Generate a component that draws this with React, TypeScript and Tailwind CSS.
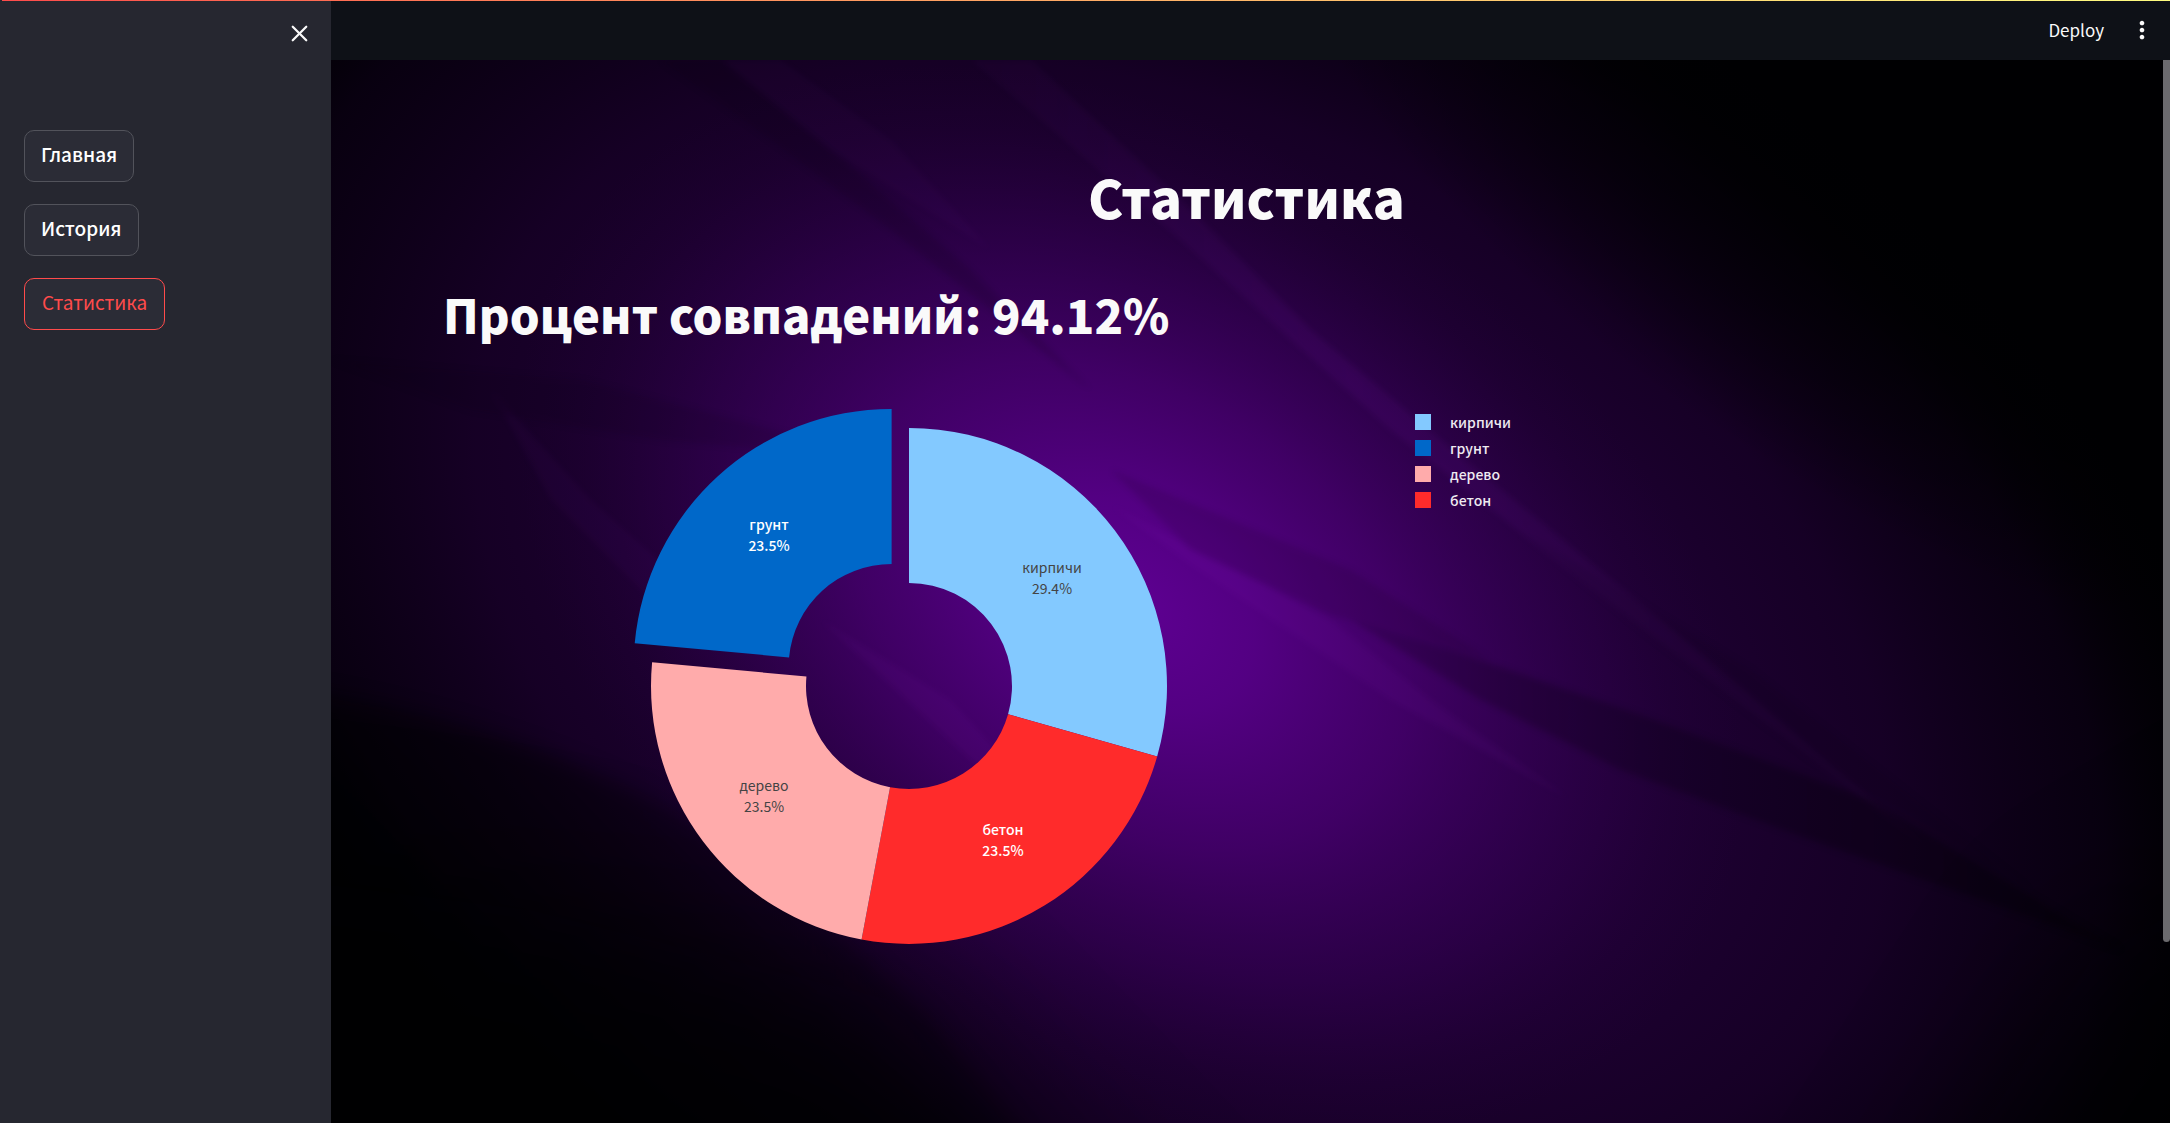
import { X } from 'lucide-react';
import { MdMoreVert } from 'react-icons/md';

type Slice = {
  name: string;
  share: number;
  fill: string;
  swatch: string;
  ink: string;
  pull: number;
  x: number;
  y: number;
};

// Listed clockwise from twelve o'clock.
const slices: Slice[] = [
  { name: 'кирпичи', share: 5 / 17, fill: 'fill-[#83c9ff]', swatch: 'bg-[#83c9ff]', ink: 'fill-[#444444]', pull: 0, x: 143, y: -113 },
  { name: 'бетон', share: 4 / 17, fill: 'fill-[#ff2b2b]', swatch: 'bg-[#ff2b2b]', ink: 'fill-white font-medium', pull: 0, x: 94, y: 149 },
  { name: 'дерево', share: 4 / 17, fill: 'fill-[#ffabab]', swatch: 'bg-[#ffabab]', ink: 'fill-[#444444]', pull: 0, x: -145, y: 105 },
  { name: 'грунт', share: 4 / 17, fill: 'fill-[#0068c9]', swatch: 'bg-[#0068c9]', ink: 'fill-white font-medium', pull: 0.1, x: -140, y: -156 },
];

const legendOrder = ['кирпичи', 'грунт', 'дерево', 'бетон'];

const OUTER = 258;
const INNER = 103;

function slicePath(start: number, share: number, pull: number) {
  const a = start * 2 * Math.PI;
  const b = (start + share) * 2 * Math.PI;
  const mid = (a + b) / 2;
  const cx = Math.sin(mid) * pull * OUTER;
  const cy = -Math.cos(mid) * pull * OUTER;
  const at = (r: number, t: number) =>
    `${(cx + r * Math.sin(t)).toFixed(2)} ${(cy - r * Math.cos(t)).toFixed(2)}`;
  return `M${at(INNER, a)}L${at(OUTER, a)}A${OUTER} ${OUTER} 0 0 1 ${at(OUTER, b)}L${at(INNER, b)}A${INNER} ${INNER} 0 0 0 ${at(INNER, a)}Z`;
}

function Donut() {
  let start = 0;
  return (
    <svg viewBox="-280 -280 560 560" className="w-[560px] max-w-full" role="img" aria-label="Распределение материалов">
      {slices.map((s) => {
        const d = slicePath(start, s.share, s.pull);
        start += s.share;
        return (
          <g key={s.name}>
            <path d={d} className={s.fill} />
            <text textAnchor="middle" className={`text-[14px] ${s.ink}`}>
              <tspan x={s.x} y={s.y}>{s.name}</tspan>
              <tspan x={s.x} y={s.y + 21}>{`${(s.share * 100).toFixed(1)}%`}</tspan>
            </text>
          </g>
        );
      })}
    </svg>
  );
}

function Backdrop() {
  return (
    <svg viewBox="0 0 1839 1063" preserveAspectRatio="none" className="absolute inset-0 h-full w-full" aria-hidden="true">
      <defs>
        <radialGradient id="haze">
          <stop offset="0" stopColor="#2a0044" />
          <stop offset="0.4" stopColor="#200036" />
          <stop offset="0.65" stopColor="#170027" stopOpacity="0.95" />
          <stop offset="0.85" stopColor="#0c0016" stopOpacity="0.7" />
          <stop offset="1" stopColor="#000000" stopOpacity="0" />
        </radialGradient>
        <radialGradient id="core">
          <stop offset="0" stopColor="#5e0092" />
          <stop offset="0.2" stopColor="#58008a" stopOpacity="0.9" />
          <stop offset="0.45" stopColor="#4e007a" stopOpacity="0.66" />
          <stop offset="0.7" stopColor="#400066" stopOpacity="0.34" />
          <stop offset="0.88" stopColor="#340052" stopOpacity="0.1" />
          <stop offset="1" stopColor="#2c0048" stopOpacity="0" />
        </radialGradient>
        <radialGradient id="shade">
          <stop offset="0" stopColor="#000002" />
          <stop offset="0.5" stopColor="#000002" stopOpacity="0.8" />
          <stop offset="1" stopColor="#000002" stopOpacity="0" />
        </radialGradient>
        <linearGradient id="ray" x1="0" y1="0" x2="1" y2="0">
          <stop offset="0" stopColor="#a020e0" stopOpacity="0.03" />
          <stop offset="0.4" stopColor="#a020e0" stopOpacity="0.08" />
          <stop offset="1" stopColor="#a020e0" stopOpacity="0.03" />
        </linearGradient>
        <linearGradient id="fold" x1="0" y1="0" x2="1" y2="0">
          <stop offset="0" stopColor="#0c0014" stopOpacity="0.2" />
          <stop offset="0.5" stopColor="#080010" stopOpacity="0.32" />
          <stop offset="1" stopColor="#020004" stopOpacity="0.45" />
        </linearGradient>
        <linearGradient id="lowerLeft" gradientUnits="userSpaceOnUse" x1="160" y1="980" x2="500" y2="640">
          <stop offset="0" stopColor="#000002" stopOpacity="0.7" />
          <stop offset="0.5" stopColor="#020004" stopOpacity="0.5" />
          <stop offset="1" stopColor="#0a0014" stopOpacity="0" />
        </linearGradient>
        <filter id="soft" x="-20%" y="-20%" width="140%" height="140%" colorInterpolationFilters="sRGB">
          <feGaussianBlur stdDeviation="3" />
        </filter>
        <filter id="edge" x="-20%" y="-20%" width="140%" height="140%" colorInterpolationFilters="sRGB">
          <feGaussianBlur stdDeviation="10" />
        </filter>
        <filter id="softer" x="-40%" y="-40%" width="180%" height="180%" colorInterpolationFilters="sRGB">
          <feGaussianBlur stdDeviation="70" />
        </filter>
      </defs>
      <rect width="1839" height="1063" fill="#000002" />
      <ellipse cx="850" cy="570" rx="1160" ry="780" fill="url(#haze)" transform="rotate(28 850 570)" />
      <ellipse cx="1700" cy="60" rx="880" ry="430" fill="url(#shade)" transform="rotate(30 1700 60)" />
      <ellipse cx="800" cy="545" rx="670" ry="470" fill="url(#core)" transform="rotate(34 800 545)" />
      <path d="M-60 625 Q140 655 300 728 Q440 800 600 960 L760 1160 L-60 1160Z" fill="url(#lowerLeft)" filter="url(#edge)" />
      <path d="M-200 1300 L-200 800 L200 850 L560 940 L900 1300Z" fill="#000002" fillOpacity="0.7" filter="url(#softer)" />
      <path d="M2000 1300 L2000 760 L1760 900 L1500 1300Z" fill="#000002" fillOpacity="0.7" filter="url(#softer)" />
      <g filter="url(#soft)">
        <path d="M1020 560 L1120 590 L1310 655 L1540 740 L1690 830 L1790 890 L1650 840 L1480 780 L1290 710 L1150 640Z" fill="url(#fold)" />
        <path d="M1190 470 L1420 610 L1560 720 L1700 830 L1480 700 L1310 570Z" fill="#08000f" fillOpacity="0.12" />
        <path d="M330 0 L390 0 L500 90 L640 210 L760 330 L560 170 L440 80Z" fill="#08000f" fillOpacity="0.15" />
        <path d="M390 0 L450 0 L560 80 L660 190 L500 90Z" fill="#a020e0" fillOpacity="0.03" />
        <path d="M640 0 L700 0 L860 150 L980 270 L1110 380 L1330 560 L1600 790 L1300 560 L1060 370 L850 180Z" fill="url(#ray)" />
        <path d="M160 330 L260 440 L350 520 L320 540 L220 440Z" fill="#a020e0" fillOpacity="0.04" />
        <path d="M0 300 L250 320 L560 400 L330 380 L140 350Z" fill="#08000f" fillOpacity="0.12" />
        <path d="M490 560 L640 700 L720 750 L620 640Z" fill="#b030f0" fillOpacity="0.05" />
        <path d="M780 445 L860 505 L1060 640 L1240 740 L1100 640 L1000 560Z" fill="#b030f0" fillOpacity="0.05" />
        <path d="M780 410 L900 460 L1020 510 L1160 600 L1000 555 L860 490Z" fill="#12001f" fillOpacity="0.14" />
      </g>
    </svg>
  );
}

const pages = ['Главная', 'История', 'Статистика'];

export default function App() {
  const current = 'Статистика';
  return (
    <div className="relative flex min-h-screen bg-[#0e1117] font-['Noto_Sans_CJK_SC',sans-serif] text-[#fafafa]">
      <div className="absolute inset-x-0 top-0 z-10 ml-0.5 h-px bg-linear-to-r from-[#ff4b4b] to-[#fffd80]" />

      <aside className="flex w-[331px] shrink-0 flex-col bg-[#262730]">
        <div className="flex justify-end pt-5 pr-[18px]">
          <button type="button" aria-label="Закрыть боковую панель">
            <X size={27} strokeWidth={2} />
          </button>
        </div>
        <nav className="mt-[83px] flex flex-col items-start gap-[22px] px-6">
          {pages.map((page) => (
            <button
              key={page}
              type="button"
              className={
                page === current
                  ? 'h-[52px] rounded-[10px] border border-[#ff4b4b] bg-[#2b2c36] px-[17px] pb-1 text-[19px] text-[#ff4b4b]'
                  : 'h-[52px] rounded-[10px] border border-[#52535b] bg-[#2b2c36] px-4 pb-1 text-[19px] font-medium text-white'
              }
            >
              {page}
            </button>
          ))}
        </nav>
      </aside>

      <div className="flex min-w-0 flex-1 flex-col">
        <header className="flex h-[60px] shrink-0 items-center justify-end gap-6 pr-[14px]">
          <button type="button" className="text-[17px]">Deploy</button>
          <button type="button" aria-label="Меню">
            <MdMoreVert size={28} />
          </button>
        </header>

        <main className="relative flex-1 overflow-hidden">
          <Backdrop />
          <div className="relative pt-[104px] pr-[120px] pb-28 pl-28">
            <h1 className="text-center text-[53px] leading-[64px] font-black">Статистика</h1>
            <h2 className="mt-[58px] text-[47px] leading-[56px] font-black">Процент совпадений: 94.12%</h2>
            <section className="mt-16 flex items-start gap-10">
              <div className="flex w-[58%] justify-center">
                <Donut />
              </div>
              <ul className="pt-[3px]">
                {legendOrder.map((name) => (
                  <li key={name} className="flex h-[26px] items-center gap-[19px] text-[14px] font-medium text-[#eeeaf0]">
                    <span className={`size-4 ${slices.find((s) => s.name === name)?.swatch}`} />
                    {name}
                  </li>
                ))}
              </ul>
            </section>
          </div>
          <div className="absolute top-0 right-0 h-[83%] w-[7px] rounded-b-full bg-[#6b6a6e]" />
        </main>
      </div>
    </div>
  );
}
